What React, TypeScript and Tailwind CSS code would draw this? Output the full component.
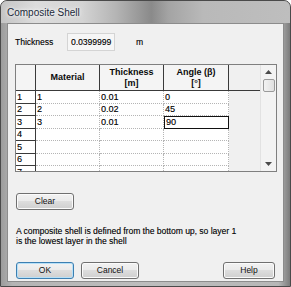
import React from "react";

const rows = [
  { n: "1", mat: "1", th: "0.01", ang: "0" },
  { n: "2", mat: "2", th: "0.02", ang: "45" },
  { n: "3", mat: "3", th: "0.01", ang: "90" },
  { n: "4", mat: "", th: "", ang: "" },
  { n: "5", mat: "", th: "", ang: "" },
  { n: "6", mat: "", th: "", ang: "" },
  { n: "7", mat: "", th: "", ang: "" },
];

const rowH = ["h-[13px]", "h-[12px]", "h-[13px]", "h-[12px]", "h-[13px]", "h-[12px]", "h-[13px]"];

const WinButton = ({ label, def, w }: { label: string; def?: boolean; w: string }) => (
  <button
    type="button"
    className={`${w} h-[17px] rounded-[3px] border ${
      def ? "border-[#3c7fb1] shadow-[inset_0_0_0_1px_#b6e0f8]" : "border-[#707070] shadow-[inset_0_0_0_1px_#fbfbfb]"
    } bg-[linear-gradient(to_bottom,#f2f2f2_0%,#ebebeb_45%,#dddddd_50%,#cfcfcf_100%)] text-[8.5px] leading-none text-[#111] flex items-center justify-center`}
  >
    {label}
  </button>
);

export default function App() {
  return (
    <div className="w-[291px] h-[287px] overflow-hidden bg-white">
      <div
        className="w-[291px] h-[287px] flex flex-col rounded-t-[7px] border border-[#4a4a4a] bg-[linear-gradient(90deg,#9c9c9c_0%,#b4b4b4_4%,#bdbdbd_50%,#b7b7b7_96%,#7c7c7c_100%)]"
        style={{ fontFamily: '"Liberation Sans", Arial, sans-serif' }}
      >
        {/* title bar */}
        <div className="h-[22px] flex items-center rounded-t-[6px] px-[6px] bg-[linear-gradient(90deg,#c4c4c4_0%,#dcdcdc_12%,#d4d4d4_28%,#b4b4b4_40%,#8a8a8a_52%,#a4a4a4_58%,#b9b9b9_70%,#bebebe_100%)]">
          <span className="text-[10px] text-[#1b2a3a] [text-shadow:0_0_6px_#ffffff,0_0_3px_#ffffff]">
            Composite Shell
          </span>
        </div>

        {/* client area */}
        <div className="flex-1 mx-[6px] mb-[4px] border border-[#8c8c8c] bg-[#f0f0f0] flex flex-col pl-[7px] pt-[9px] text-[#0a0a0a] [text-shadow:0.3px_0_0_rgba(0,0,0,0.45)]">
          <div className="flex items-center h-[18px]">
            <span className="w-[52px] text-[8.5px]">Thickness</span>
            <div className="w-[48px] h-[18px] border border-[#d4d4d4] bg-[#f6f6f6] flex items-center pl-[3px] text-[8.5px]">
              0.0399999
            </div>
            <span className="ml-[21px] text-[8.5px]">m</span>
          </div>

          {/* data grid */}
          <div className="mt-[13px] w-[262px] h-[108px] border border-[#7f7f7f] bg-[#f0f0f0] flex overflow-hidden text-[9px]">
            <div className="flex-1 flex flex-col overflow-hidden">
              <div className="flex h-[26px] shrink-0 border-b border-[#3a3a3a] font-bold [text-shadow:none]">
                <div className="w-[20px] border-r border-[#3a3a3a] bg-[#f4f4f4]" />
                <div className="w-[64px] border-r border-[#3a3a3a] bg-[#f4f4f4] flex items-center justify-center">
                  Material
                </div>
                <div className="w-[64px] border-r border-[#3a3a3a] bg-[#f4f4f4] flex flex-col items-center justify-center leading-[11px]">
                  <span>Thickness</span>
                  <span>[m]</span>
                </div>
                <div className="w-[65px] border-r border-[#3a3a3a] bg-[#f4f4f4] flex flex-col items-center justify-center leading-[11px]">
                  <span>Angle (β)</span>
                  <span>[°]</span>
                </div>
              </div>
              {rows.map((r, i) => (
                <div key={r.n} className={`flex shrink-0 ${rowH[i]}`}>
                  <div className="w-[20px] border-r border-b border-[#3a3a3a] bg-white pl-[1px] flex items-center leading-none">
                    {r.n}
                  </div>
                  <div className="w-[64px] border-r border-b border-dotted border-[#b5b5b5] bg-white pl-[1px] flex items-center leading-none">
                    {r.mat}
                  </div>
                  <div className="w-[64px] border-r border-b border-dotted border-[#b5b5b5] bg-white pl-[1px] flex items-center leading-none">
                    {r.th}
                  </div>
                  {i === 2 ? (
                    <div className="w-[65px] border border-[#111] bg-white pl-[1px] flex items-center leading-none">
                      {r.ang}
                    </div>
                  ) : (
                    <div className="w-[65px] border-r border-b border-dotted border-[#b5b5b5] bg-white pl-[1px] flex items-center leading-none">
                      {r.ang}
                    </div>
                  )}
                </div>
              ))}
            </div>
            {/* scrollbar */}
            <div className="w-[16px] shrink-0 border-l border-[#e2e2e2] bg-[#f3f3f3] flex flex-col items-center">
              <div className="h-[14px] flex items-center justify-center">
                <svg width="7" height="4" viewBox="0 0 7 4">
                  <path d="M3.5 0 L7 4 L0 4 Z" fill="#4a4a4a" />
                </svg>
              </div>
              <div className="w-[12px] h-[13px] rounded-[2px] border border-[#9a9a9a] bg-[linear-gradient(90deg,#f2f2f2,#e0e0e0)]" />
              <div className="flex-1" />
              <div className="h-[14px] flex items-center justify-center">
                <svg width="7" height="4" viewBox="0 0 7 4">
                  <path d="M0 0 L7 0 L3.5 4 Z" fill="#4a4a4a" />
                </svg>
              </div>
            </div>
          </div>

          <div className="mt-[21px] ml-[1px]">
            <WinButton label="Clear" w="w-[58px]" />
          </div>

          <p className="mt-[16px] ml-[1px] text-[8.5px] leading-[10px]">
            A composite shell is defined from the bottom up, so layer 1
            <br />
            is the lowest layer in the shell
          </p>

          <div className="mt-[16px] ml-[1px] flex w-[259px]">
            <WinButton label="OK" def w="w-[58px]" />
            <div className="ml-[7px]">
              <WinButton label="Cancel" w="w-[58px]" />
            </div>
            <div className="ml-auto">
              <WinButton label="Help" w="w-[52px]" />
            </div>
          </div>
        </div>
      </div>
    </div>
  );
}
